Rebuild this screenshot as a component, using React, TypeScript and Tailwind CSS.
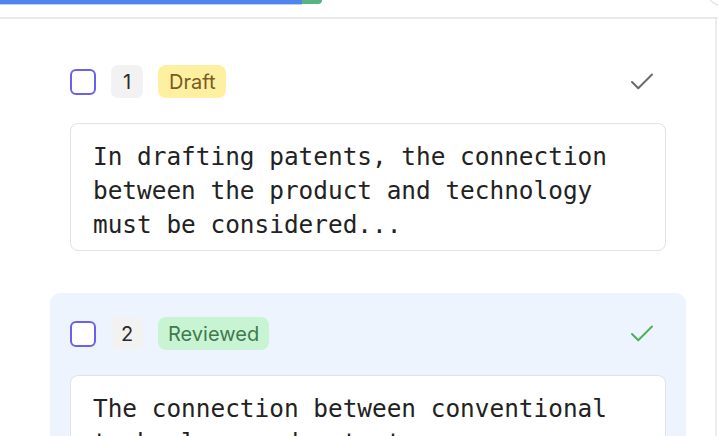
import { Check } from "lucide-react";

type Item = {
  n: number;
  status: "Draft" | "Reviewed";
  text: string;
  active?: boolean;
};

const items: Item[] = [
  {
    n: 1,
    status: "Draft",
    text: "In drafting patents, the connection\nbetween the product and technology\nmust be considered...",
  },
  {
    n: 2,
    status: "Reviewed",
    text: "The connection between conventional\ntechnology and patents\nshould be explained...",
    active: true,
  },
];

function StatusBadge({ status }: { status: Item["status"] }) {
  const cls =
    status === "Draft"
      ? "bg-[#fdf0a0] text-[#7a5a22] px-[11px]"
      : "bg-[#c9f4d4] text-[#3f7a4c] px-[10px]";
  return (
    <span className={`flex h-[33px] items-center rounded-[8px] text-[20px] ${cls}`}>
      {status}
    </span>
  );
}

function ItemCard({ item }: { item: Item }) {
  return (
    <div className={`rounded-[10px] px-5 pt-6 pb-6 ${item.active ? "bg-[#eef4fd]" : "bg-white"}`}>
      <div className="flex h-[33px] items-center">
        <div className="h-[26px] w-[26px] rounded-[6px] border-2 border-[#6a60ee] bg-white" />
        <span className="ml-[15px] flex h-[33px] w-8 items-center justify-center rounded-[7px] bg-[#f2f2f2] text-[20px] text-[#2a2a2a]">
          {item.n}
        </span>
        <div className="ml-[15px]">
          <StatusBadge status={item.status} />
        </div>
        <Check
          size={30}
          strokeWidth={1.6}
          className={`ml-auto mr-[9px] ${item.status === "Reviewed" ? "text-[#4caf5a]" : "text-[#6b6b6b]"}`}
        />
      </div>
      <div className="mt-[25px] rounded-[8px] border border-[#e2e2e2] bg-white pt-4 pb-2 pl-[22px] pr-4">
        <p className="whitespace-pre-line font-['DejaVu_Sans_Mono',monospace] text-[24.4px] leading-[34px] text-[#222]">
          {item.text}
        </p>
      </div>
    </div>
  );
}

export default function App() {
  return (
    <div className="relative h-[436px] w-full overflow-hidden bg-white font-['Inter',sans-serif]">
      {/* top progress */}
      <div className="h-[19px] border-b-2 border-[#e9e9e9]">
        <div className="flex">
          <div className="h-1 w-[302px] bg-[#4f83ee] shadow-[0_1px_0_#bcd0f7]" />
          <div className="h-1 w-5 rounded-br-full bg-[#54b583]" />
        </div>
      </div>
      <div className="absolute left-[706px] top-[-26px] h-8 w-8 rounded-full border border-[#d6d6d6]" />

      <div className="flex">
        <div className="flex-1 pt-[22px] pl-[50px] pr-[29px]">
          <div className="flex flex-col gap-[18px]">
            {items.map((it) => (
              <ItemCard key={it.n} item={it} />
            ))}
          </div>
        </div>
        <div className="h-[420px] w-[3px] border-l-2 border-[#ececec]" />
      </div>
    </div>
  );
}
